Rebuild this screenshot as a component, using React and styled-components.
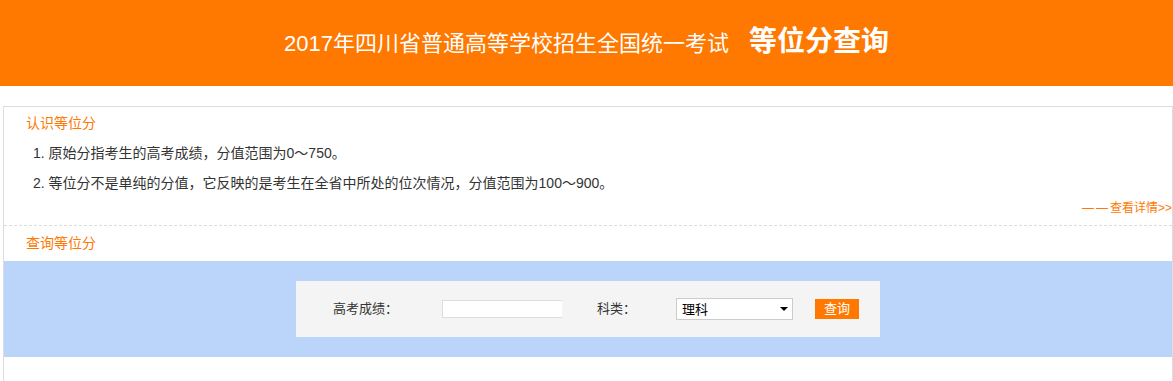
import React from "react";
import styled, { createGlobalStyle } from "styled-components";

const ORANGE = "#ff7800";

const Global = createGlobalStyle`
  html, body { margin: 0; padding: 0; background: #fff; }
  body { font-family: "Liberation Sans", "Noto Sans CJK SC", sans-serif; color: #333; }
  * { box-sizing: border-box; }
`;

const Header = styled.header`
  height: 86px;
  background: ${ORANGE};
  display: flex;
  align-items: center;
  justify-content: center;
`;

const HeaderTitle = styled.h1`
  margin: 0;
  color: #fff;
  font-size: 22px;
  font-weight: normal;
  line-height: 30px;
  display: flex;
  align-items: baseline;
`;

const HeaderStrong = styled.strong`
  font-size: 28px;
  font-weight: bold;
  margin-left: 20px;
`;

const Panel = styled.div`
  margin: 20px 0 0 3px;
  width: 1170px;
  min-height: 300px;
  border: 1px solid #ddd;
`;

const SectionTitle = styled.div`
  padding: ${(p) => p.$pad || "1px 0 0 22px"};
  color: ${ORANGE};
  font-size: 14px;
  line-height: 30px;
`;

const List = styled.ol`
  margin: 0;
  padding: 0 0 0 29px;
  list-style: none;
`;

const Item = styled.li`
  font-size: 14px;
  line-height: 30px;
  color: #333;
`;

const MoreRow = styled.div`
  display: flex;
  justify-content: flex-end;
  padding-bottom: 7px;
  border-bottom: 1px dashed #ddd;
`;

const MoreLink = styled.a`
  color: ${ORANGE};
  font-size: 12px;
  line-height: 20px;
  text-decoration: none;
`;

const Dashes = styled.span`
  letter-spacing: 2px;
`;

const QueryBand = styled.div`
  background: #bad5f9;
  padding: 20px 0;
`;

const Form = styled.form`
  margin: 0 auto;
  width: 584px;
  height: 56px;
  background: #f4f4f4;
  display: flex;
  align-items: center;
  padding-left: 37px;
`;

const Label = styled.label`
  width: ${(p) => p.$w}px;
  font-size: 13px;
  color: #333;
  line-height: 20px;
`;

const ScoreInput = styled.input`
  width: 120px;
  height: 18px;
  border: 1px solid #ddd;
  border-right: none;
  background: #fff;
  padding: 0 4px;
  margin-right: 35px;
  outline: none;
  font-size: 13px;
`;

const SelectWrap = styled.div`
  position: relative;
  width: 117px;
  height: 22px;
  margin-right: 22px;
`;

const Select = styled.select`
  appearance: none;
  -webkit-appearance: none;
  width: 100%;
  height: 100%;
  border: 1px solid #ccc;
  border-radius: 0;
  background: #fff;
  color: #000;
  font-family: "Liberation Sans", "Noto Sans CJK SC", sans-serif;
  font-size: 13px;
  padding: 0 0 0 5px;
  outline: none;
`;

const Arrow = styled.svg`
  position: absolute;
  right: 5px;
  top: 9px;
  pointer-events: none;
`;

const Button = styled.button`
  width: 44px;
  height: 20px;
  border: none;
  background: ${ORANGE};
  color: #fff;
  font-family: "Liberation Sans", "Noto Sans CJK SC", sans-serif;
  font-size: 13px;
  line-height: 20px;
  padding: 0;
  cursor: pointer;
`;

export default function App() {
  return (
    <>
      <Global />
      <Header>
        <HeaderTitle>
          2017年四川省普通高等学校招生全国统一考试
          <HeaderStrong>等位分查询</HeaderStrong>
        </HeaderTitle>
      </Header>
      <Panel>
        <SectionTitle>认识等位分</SectionTitle>
        <List>
          <Item>1. 原始分指考生的高考成绩，分值范围为0～750。</Item>
          <Item>
            2. 等位分不是单纯的分值，它反映的是考生在全省中所处的位次情况，分值范围为100～900。
          </Item>
        </List>
        <MoreRow>
          <MoreLink href="#">
            <Dashes>——</Dashes>查看详情&gt;&gt;
          </MoreLink>
        </MoreRow>
        <SectionTitle $pad="2px 0 3px 22px">查询等位分</SectionTitle>
        <QueryBand>
          <Form onSubmit={(e) => e.preventDefault()}>
            <Label $w={109}>高考成绩：</Label>
            <ScoreInput type="text" />
            <Label $w={79}>科类：</Label>
            <SelectWrap>
              <Select defaultValue="理科">
                <option value="理科">理科</option>
                <option value="文科">文科</option>
              </Select>
              <Arrow width="8" height="4" viewBox="0 0 8 4">
                <path d="M0 0 L8 0 L4 4 Z" fill="#000" />
              </Arrow>
            </SelectWrap>
            <Button type="submit">查询</Button>
          </Form>
        </QueryBand>
      </Panel>
    </>
  );
}
